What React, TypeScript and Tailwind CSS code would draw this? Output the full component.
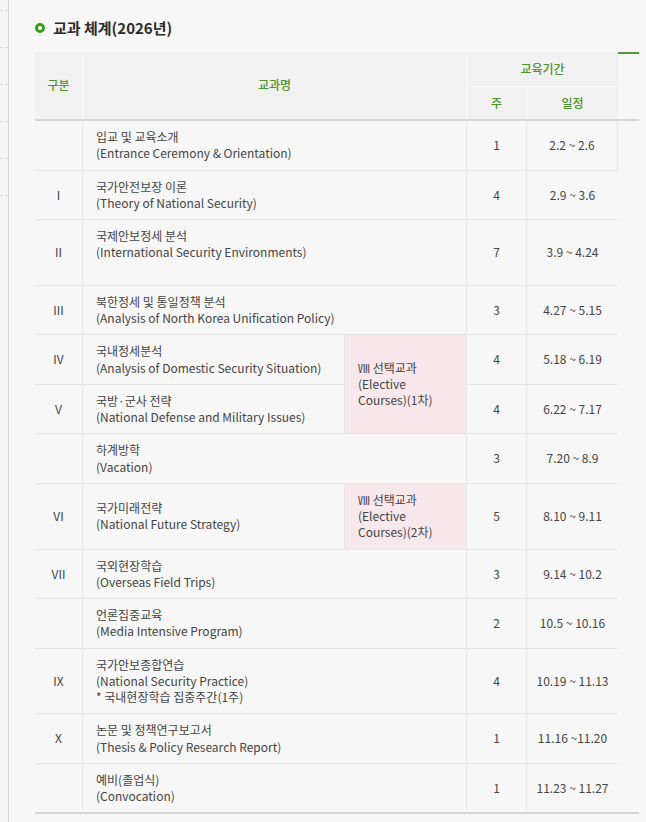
type Row = {
  gubun: string
  ko: string
  en: string
  note?: string
  weeks: string
  date: string
  elective?: 'first' | 'second' | 'covered'
}

const rows: Row[] = [
  { gubun: '', ko: '입교 및 교육소개', en: '(Entrance Ceremony & Orientation)', weeks: '1', date: '2.2 ~ 2.6' },
  { gubun: 'I', ko: '국가안전보장 이론', en: '(Theory of National Security)', weeks: '4', date: '2.9 ~ 3.6' },
  { gubun: 'II', ko: '국제안보정세 분석', en: '(International Security Environments)', note: '\u00a0', weeks: '7', date: '3.9 ~ 4.24' },
  { gubun: 'III', ko: '북한정세 및 통일정책 분석', en: '(Analysis of North Korea Unification Policy)', weeks: '3', date: '4.27 ~ 5.15' },
  { gubun: 'IV', ko: '국내정세분석', en: '(Analysis of Domestic Security Situation)', weeks: '4', date: '5.18 ~ 6.19', elective: 'first' },
  { gubun: 'V', ko: '국방·군사 전략', en: '(National Defense and Military Issues)', weeks: '4', date: '6.22 ~ 7.17', elective: 'covered' },
  { gubun: '', ko: '하계방학', en: '(Vacation)', weeks: '3', date: '7.20 ~ 8.9' },
  { gubun: 'VI', ko: '국가미래전략', en: '(National Future Strategy)', weeks: '5', date: '8.10 ~ 9.11', elective: 'second' },
  { gubun: 'VII', ko: '국외현장학습', en: '(Overseas Field Trips)', weeks: '3', date: '9.14 ~ 10.2' },
  { gubun: '', ko: '언론집중교육', en: '(Media Intensive Program)', weeks: '2', date: '10.5 ~ 10.16' },
  { gubun: 'IX', ko: '국가안보종합연습', en: '(National Security Practice)', note: '* 국내현장학습 집중주간(1주)', weeks: '4', date: '10.19 ~ 11.13' },
  { gubun: 'X', ko: '논문 및 정책연구보고서', en: '(Thesis & Policy Research Report)', weeks: '1', date: '11.16 ~11.20' },
  { gubun: '', ko: '예비(졸업식)', en: '(Convocation)', weeks: '1', date: '11.23 ~ 11.27' },
]

function ElectiveCell({ round, span }: { round: string; span: number }) {
  return (
    <td
      rowSpan={span}
      className="border-b border-r border-[#e6e6e6] bg-[#f8e8ec] py-2 pl-[13px] pr-2 text-left align-middle"
    >
      <div>Ⅷ 선택교과</div>
      <div>(Elective</div>
      <div>Courses)({round})</div>
    </td>
  )
}

export default function App() {
  const last = rows.length - 1

  return (
    <div className="flex min-h-[822px] bg-[#f7f7f7] font-['Noto_Sans_CJK_KR','Noto_Sans',sans-serif] text-[#444444]">
      {/* left edge of the side menu */}
      <div className="flex w-[8px] shrink-0 flex-col gap-[36px] bg-[#f4f4f4] pt-[10px]">
        {[0, 1, 2, 3, 4, 5].map((i) => (
          <div key={i} className="h-px border-t border-dashed border-[#d9d9d9]" />
        ))}
      </div>
      <div className="w-px shrink-0 bg-[#d2d2d2]" />

      <div className="flex-1 pl-[26px] pt-[17px]">
        <h2 className="flex items-center gap-[8px] text-[15px] font-bold leading-[22px] text-[#2b2b2b]">
          <span className="h-[10px] w-[10px] rounded-full border-[3px] border-[#3a9c16] bg-white" />
          교과 체계(2026년)
        </h2>

        <table className="mt-[13px] w-[604px] table-fixed border-separate border-spacing-0 text-[12px] leading-[16.25px]">
          <colgroup>
            <col className="w-[48px]" />
            <col className="w-[262px]" />
            <col className="w-[122px]" />
            <col className="w-[60px]" />
            <col className="w-[91px]" />
            <col className="w-[21px]" />
          </colgroup>
          <thead className="text-[12px] font-medium text-[#4f9330]">
            <tr className="h-[35px]">
              <th rowSpan={2} className="border-b-2 border-r border-b-[#d4d4d4] border-r-[#fafafa] bg-[#f1f1f1] font-medium">
                구분
              </th>
              <th colSpan={2} rowSpan={2} className="border-b-2 border-r border-b-[#d4d4d4] border-r-[#fafafa] bg-[#f1f1f1] font-medium">
                교과명
              </th>
              <th colSpan={2} className="border-b border-[#fafafa] bg-[#f1f1f1] font-medium">
                교육기간
              </th>
              <th rowSpan={2} className="border-b-2 border-t-2 border-b-[#d4d4d4] border-t-[#4e9a3a] align-top" />
            </tr>
            <tr className="h-[34px]">
              <th className="border-b-2 border-r border-b-[#d4d4d4] border-r-[#fafafa] bg-[#f1f1f1] font-medium">주</th>
              <th className="border-b-2 border-b-[#d4d4d4] bg-[#f1f1f1] font-medium">일정</th>
            </tr>
          </thead>
          <tbody>
            {rows.map((r, i) => {
              const bottom = i === last ? 'border-b-2 border-b-[#d4d4d4]' : 'border-b border-b-[#e6e6e6]'
              return (
                <tr key={r.ko}>
                  <td className={`${bottom} border-r border-r-[#e6e6e6] py-2 text-center align-middle`}>{r.gubun}</td>
                  <td
                    colSpan={r.elective ? 1 : 2}
                    className={`${bottom} border-r border-r-[#e6e6e6] py-2 pl-[13px] pr-2 text-left align-middle`}
                  >
                    <div>{r.ko}</div>
                    <div>{r.en}</div>
                    {r.note && <div>{r.note}</div>}
                  </td>
                  {r.elective === 'first' && <ElectiveCell round="1차" span={2} />}
                  {r.elective === 'second' && <ElectiveCell round="2차" span={1} />}
                  <td className={`${bottom} border-r border-r-[#e6e6e6] py-2 text-center align-middle`}>{r.weeks}</td>
                  <td className={`${bottom} ${i === 0 ? 'border-r border-r-[#e6e6e6]' : ''} py-2 text-center align-middle`}>
                    {r.date}
                  </td>
                  <td className={i === last ? 'border-b-2 border-b-[#d4d4d4]' : ''} />
                </tr>
              )
            })}
          </tbody>
        </table>
      </div>
    </div>
  )
}
